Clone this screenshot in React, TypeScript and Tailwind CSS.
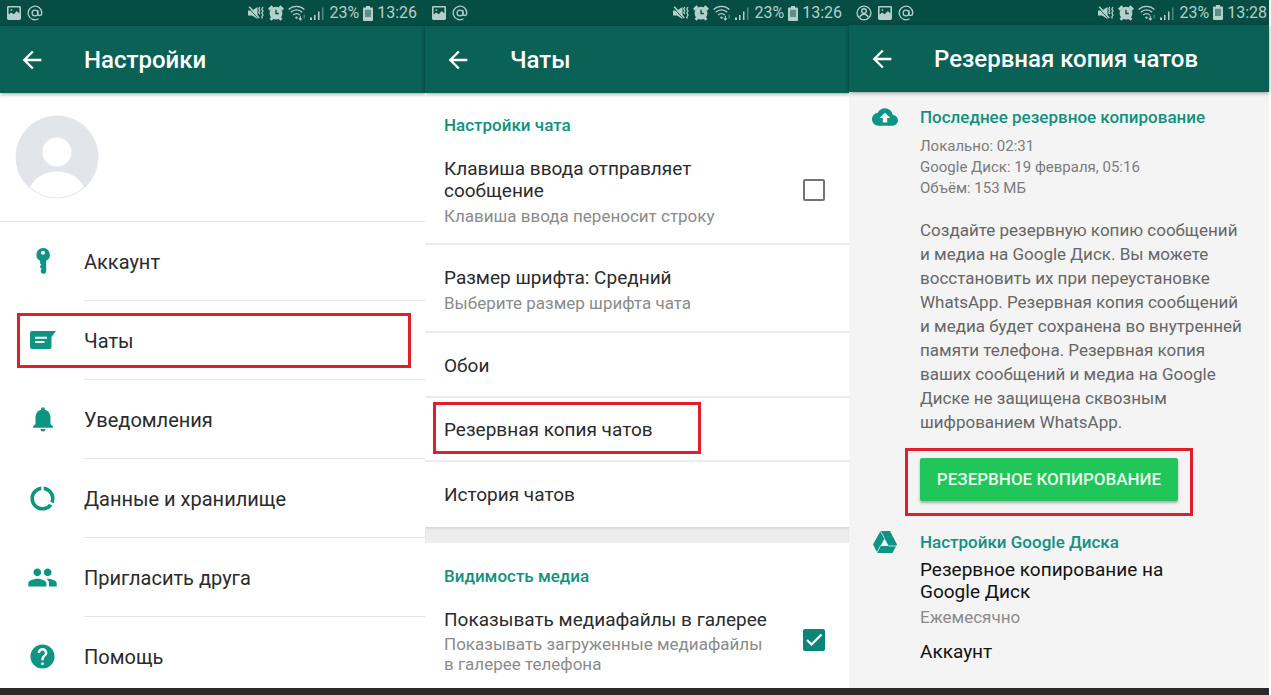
import type { ReactNode } from "react";
import { MdArrowBack, MdBackup, MdDataUsage, MdHelp, MdNotifications, MdPeople } from "react-icons/md";

function PictureIcon() {
  return (
    <svg viewBox="0 0 14 14" className="size-3.5" fill="currentColor" aria-hidden="true">
      <path
        fillRule="evenodd"
        d="M1.4 0h11.2A1.4 1.4 0 0 1 14 1.4v11.2a1.4 1.4 0 0 1-1.4 1.4H1.4A1.4 1.4 0 0 1 0 12.600V1.4A1.4 1.4 0 0 1 1.4 0zM1.600 1.600v7l2.600-2 2.600 1.600 3-3.200 2.600 2.600v-6zM3.600 3.200h1.600v1.600H3.600z"
      />
    </svg>
  );
}

function AtIcon() {
  return (
    <svg viewBox="0 0 16 16" className="size-4" fill="none" stroke="currentColor" strokeWidth="1.3" aria-hidden="true">
      <circle cx="8" cy="8" r="2.900" />
      <path d="M10.900 5v3.800c0 2.400 3.900 2.300 3.900-.8A6.800 6.800 0 1 0 11.500 13.800" />
    </svg>
  );
}

function PersonIcon() {
  return (
    <svg viewBox="0 0 16 16" className="size-4" fill="none" stroke="currentColor" strokeWidth="1.4" aria-hidden="true">
      <circle cx="8" cy="8" r="6.900" />
      <circle cx="8" cy="6" r="2.300" />
      <path d="M3.800 12.500c.6-2.400 2.200-3.200 4.200-3.200s3.600.8 4.200 3.200" />
    </svg>
  );
}

function MuteIcon() {
  return (
    <svg viewBox="0 0 16 14" className="h-3.5 w-4" fill="currentColor" aria-hidden="true">
      <path d="M0 4.500h4L9.500 1v12L4 9.500H0z" />
      <path d="M1 2.300l9.500 10.500" stroke="#064d44" strokeWidth="1" />
      <path d="M1.200 .8l10 11.200" stroke="currentColor" strokeWidth="1.600" />
      <path
        d="M11.800 1l-1 1.800 1 1.800-1 1.800 1 1.800M15 1l-1.200 2 1.200 2-1.200 2 1.200 2-1.200 2 .6 1.600"
        fill="none"
        stroke="currentColor"
        strokeWidth="1.300"
      />
    </svg>
  );
}

function AlarmIcon() {
  return (
    <svg viewBox="0 0 16 16" className="size-4" aria-hidden="true">
      <path d="M1 4.800l3.500-3.500M15 4.800l-3.500-3.500M2.500 14.800l2.500-2.500M13.500 14.800l-2.500-2.500" stroke="currentColor" strokeWidth="2.800" />
      <circle cx="8" cy="8.200" r="6.400" fill="currentColor" />
      <path d="M8 4.800v3.700h2.800" fill="none" stroke="#064d44" strokeWidth="1.400" />
    </svg>
  );
}

function WifiIcon() {
  return (
    <svg viewBox="0 0 18 16" className="h-4 w-[18px]" fill="none" stroke="currentColor" strokeWidth="1.400" aria-hidden="true">
      <path d="M.6 4.600c4.300-4.300 11.500-4.300 15.800 0M2.800 7.300c3.200-3.200 8.200-3.200 11.400 0M5.200 10c1.900-1.900 4.700-1.900 6.600 0" />
      <circle cx="8.500" cy="12.600" r="1.200" fill="currentColor" stroke="none" />
      <path d="M12.300 10.800v4M10.800 13.300l1.500 1.700 1.500-1.700" strokeWidth="1.100" />
      <path d="M16.200 9.500v4" opacity=".45" strokeWidth="1.300" />
    </svg>
  );
}

function SignalIcon() {
  return (
    <svg viewBox="0 0 15 14" className="h-3.5 w-[15px]" fill="currentColor" aria-hidden="true">
      <path d="M0 11.500h2V14H0zM4 9h1.500v5H4zM8 5.500h1.500V14H8z" />
      <path d="M12 1.500h1.500V14H12z" opacity=".45" />
    </svg>
  );
}

function BatteryIcon() {
  return (
    <svg viewBox="0 0 10 15" className="h-[15px] w-2.5" fill="currentColor" aria-hidden="true">
      <path d="M3 0h4v1.500h2a1 1 0 0 1 1 1V14a1 1 0 0 1-1 1H1a1 1 0 0 1-1-1V2.500a1 1 0 0 1 1-1h2z" />
      <path d="M2 3.800h6V11H2z" fill="#064d44" opacity=".5" />
    </svg>
  );
}

function KeyIcon() {
  return (
    <svg viewBox="0 0 14 26" className="h-[26px] w-3.5" fill="currentColor" aria-hidden="true">
      <path
        fillRule="evenodd"
        d="M7 0a6.800 6.800 0 0 1 3.200 12.800V24l-1.500 1.800H6.500L4.800 24.200v-2.100l1-1-1.600-1.400v-2l1.200-1-1.300-1.300v-2.600A6.800 6.800 0 0 1 7 0zm0 2.800a2 2 0 1 0 0 4 2 2 0 0 0 0-4z"
      />
    </svg>
  );
}

function ChatIcon() {
  return (
    <svg viewBox="0 0 26 18" className="h-[18px] w-[26px]" aria-hidden="true">
      <path d="M2 0h24l-4.500 6v10a2 2 0 0 1-2 2H2a2 2 0 0 1-2-2V2a2 2 0 0 1 2-2z" fill="currentColor" />
      <path d="M5 6.700h12M5 11h9.500" stroke="white" strokeWidth="2" />
    </svg>
  );
}

function DriveIcon() {
  return (
    <svg viewBox="0 0 24 22" className="h-[22px] w-6" aria-hidden="true">
      <path d="M7.500 0h9.500L24 13.500 19.500 22h-15L0 13.500z" fill="currentColor" />
      <path d="M11.500 7.500l4.300 7.500H7.400z" fill="#f4f4f4" />
      <path d="M7.500 0l4 7.500M15.800 15H24M7.400 15L4 21.500" stroke="#f4f4f4" strokeWidth=".8" />
    </svg>
  );
}

function StatusBar({ time, person = false, className }: { time: string; person?: boolean; className: string }) {
  return (
    <div className={`flex items-center justify-between bg-[#064d44] text-base leading-5 text-[#b5cfcb] ${className}`}>
      <div className="flex items-center gap-1.5">
        {person && <PersonIcon />}
        <PictureIcon />
        <AtIcon />
      </div>
      <div className="flex items-center gap-1">
        <MuteIcon />
        <AlarmIcon />
        <WifiIcon />
        <SignalIcon />
        <span>23%</span>
        <BatteryIcon />
        <span>{time}</span>
      </div>
    </div>
  );
}

function AppBar({ title, className }: { title: string; className: string }) {
  return (
    <header className={`flex items-center bg-[#0a6156] text-white shadow-[0_1px_4px_rgba(0,0,0,0.4)] ${className}`}>
      <button type="button" aria-label="Назад" className="flex w-7 justify-center">
        <MdArrowBack size={28} />
      </button>
      <h1 className="pl-[38px] text-2xl leading-8 font-medium">{title}</h1>
    </header>
  );
}

const settings: { label: string; icon: ReactNode; marked?: boolean }[] = [
  { label: "Аккаунт", icon: <KeyIcon /> },
  { label: "Чаты", icon: <ChatIcon />, marked: true },
  { label: "Уведомления", icon: <MdNotifications size={30} /> },
  { label: "Данные и хранилище", icon: <MdDataUsage size={29} /> },
  { label: "Пригласить друга", icon: <MdPeople size={31} /> },
  { label: "Помощь", icon: <MdHelp size={29} /> },
];

function SettingsScreen() {
  return (
    <section className="bg-white">
      <StatusBar time="13:26" className="h-[26px] pr-2 pl-[7px]" />
      <AppBar title="Настройки" className="h-[67px] pl-[18px]" />
      <div className="border-b border-[#e4e4e4] px-[15px] py-[22px]">
        <svg viewBox="0 0 84 84" className="size-[84px]" role="img" aria-label="Фото профиля">
          <circle cx="42" cy="42" r="41.500" fill="#e2e6ea" />
          <circle cx="42" cy="37" r="14.500" fill="white" />
          <path d="M15 72c6-11 16-15.500 27-15.500S63 61 69 72a40 40 0 0 1-54 0z" fill="white" />
        </svg>
      </div>
      <ul>
        {settings.map((item) => (
          <li key={item.label} className="group relative">
            <a href="#" className="flex text-xl leading-6 text-[#2b2b2b]">
              <span className="mt-[27px] flex h-6 w-[84px] items-center justify-center pl-px text-[#0f9484]">{item.icon}</span>
              <span className="flex-1 border-b border-[#e4e4e4] pt-7 pb-[26px] group-last:border-0 group-last:pb-0">{item.label}</span>
            </a>
            {item.marked && <span className="pointer-events-none absolute top-3 right-3.5 bottom-3 left-[17px] border-3 border-[#df202b]" />}
          </li>
        ))}
      </ul>
    </section>
  );
}

function Tick({ id, checked }: { id: string; checked?: boolean }) {
  return (
    <span className="relative mb-1 flex size-[22px] shrink-0">
      <input
        id={id}
        type="checkbox"
        defaultChecked={checked}
        className="peer size-[22px] appearance-none rounded-xs border-2 border-[#737373] checked:border-[#0b8577] checked:bg-[#0b8577]"
      />
      <svg viewBox="0 0 22 22" className="pointer-events-none absolute inset-0 hidden size-[22px] peer-checked:block" aria-hidden="true">
        <path d="M4 11l4.500 4.500L18.500 5.500" fill="none" stroke="white" strokeWidth="2.200" />
      </svg>
    </span>
  );
}

function ChatsScreen() {
  return (
    <section className="bg-white text-[19px] leading-[22px] text-[#2b2b2b]">
      <StatusBar time="13:26" className="h-[26px] px-[7px]" />
      <AppBar title="Чаты" className="h-[67px] pl-[19px]" />
      <h2 className="px-[19px] pt-[21px] text-[17px] leading-[22px] font-medium text-[#12917f]">Настройки чата</h2>
      <div className="flex items-center justify-between border-b-2 border-[#ececec] pt-[22px] pr-6 pb-[17px] pl-[19px]">
        <label htmlFor="enter-key" className="flex w-[280px] flex-col">
          <span>Клавиша ввода отправляет сообщение</span>
          <span className="pt-1 text-[17px] leading-5 text-[#8b8b8b]">Клавиша ввода переносит строку</span>
        </label>
        <Tick id="enter-key" />
      </div>
      <a href="#" className="flex flex-col border-b-2 border-[#ececec] px-[19px] pt-[22px] pb-[18px]">
        <span>Размер шрифта: Средний</span>
        <span className="pt-1 text-[17px] leading-5 text-[#8b8b8b]">Выберите размер шрифта чата</span>
      </a>
      <a href="#" className="block border-b-2 border-[#ececec] px-[19px] pt-[22px] pb-[19px]">Обои</a>
      <a href="#" className="relative block border-b-2 border-[#ececec] px-[19px] pt-[21px] pb-[19px]">
        Резервная копия чатов
        <span className="pointer-events-none absolute top-1 bottom-1.5 left-2 w-[268px] border-3 border-[#df202b]" />
      </a>
      <a href="#" className="block px-[19px] pt-[22px] pb-[21px]">История чатов</a>
      <div className="h-4 bg-[#ededed] shadow-[inset_0_2px_2px_rgba(0,0,0,0.08)]" />
      <h2 className="px-[19px] pt-[22px] text-[17px] leading-[22px] font-medium text-[#12917f]">Видимость медиа</h2>
      <div className="flex items-center justify-between pt-[22px] pr-6 pl-[19px]">
        <label htmlFor="gallery" className="flex w-[330px] flex-col">
          <span>Показывать медиафайлы в галерее</span>
          <span className="pt-[3px] text-[17px] leading-5 text-[#8b8b8b]">
            Показывать загруженные медиафайлы
            <br />в галерее телефона
          </span>
        </label>
        <Tick id="gallery" checked />
      </div>
    </section>
  );
}

function BackupScreen() {
  return (
    <section className="bg-[#f4f4f4]">
      <StatusBar time="13:28" person className="h-[25px] pr-0.5 pl-[7px]" />
      <AppBar title="Резервная копия чатов" className="h-[67px] pl-[19px]" />
      <div className="flex pt-3.5">
        <span className="flex h-[22px] w-[71px] items-center justify-center text-[#0f9484]">
          <MdBackup size={26} />
        </span>
        <div className="flex-1 pr-5">
          <h2 className="text-[17px] leading-[22px] font-medium text-[#12917f]">Последнее резервное копирование</h2>
          <p className="pt-2 text-[15px] leading-[21px] text-[#7b7b7b]">
            Локально: 02:31
            <br />
            Google Диск: 19 февраля, 05:16
            <br />
            Объём: 153 МБ
          </p>
          <p className="pt-[19px] text-[17px] leading-6 text-[#666666]">
            Создайте резервную копию сообщений
            <br />и медиа на Google Диск. Вы можете
            <br />
            восстановить их при переустановке
            <br />
            WhatsApp. Резервная копия сообщений
            <br />и медиа будет сохранена во внутренней
            <br />
            памяти телефона. Резервная копия
            <br />
            ваших сообщений и медиа на Google
            <br />
            Диске не защищена сквозным
            <br />
            шифрованием WhatsApp.
          </p>
          <div className="relative mt-6 w-[258px]">
            <button
              type="button"
              className="h-[43px] w-full rounded-xs bg-[#20c659] text-[17px] font-medium text-[#e9f9ee] shadow-[0_2px_3px_rgba(0,0,0,0.3)]"
            >
              РЕЗЕРВНОЕ КОПИРОВАНИЕ
            </button>
            <span className="pointer-events-none absolute -inset-x-[15px] -top-2.5 -bottom-[15px] border-3 border-[#df202b]" />
          </div>
        </div>
      </div>
      <div className="flex pt-[30px]">
        <span className="flex h-[22px] w-[71px] items-center justify-center text-[#0f9484]">
          <DriveIcon />
        </span>
        <div className="flex-1">
          <h2 className="text-[17px] leading-[22px] font-medium text-[#12917f]">Настройки Google Диска</h2>
          <a href="#" className="flex flex-col pt-1.5 text-[19px] leading-[22px] text-[#111111]">
            <span>
              Резервное копирование на
              <br />
              Google Диск
            </span>
            <span className="pt-0.5 text-[17px] leading-6 text-[#8b8b8b]">Ежемесячно</span>
          </a>
          <a href="#" className="block pt-3 text-[19px] leading-[22px] text-[#111111]">Аккаунт</a>
        </div>
      </div>
    </section>
  );
}

export default function App() {
  return (
    <div className="flex min-h-screen flex-col bg-white pr-0.5 font-[Roboto,sans-serif]">
      <main className="grid flex-1 grid-cols-[425fr_424fr_420fr]">
        <SettingsScreen />
        <ChatsScreen />
        <BackupScreen />
      </main>
      <footer className="h-[7px] bg-[#2b2a2b]" />
    </div>
  );
}
